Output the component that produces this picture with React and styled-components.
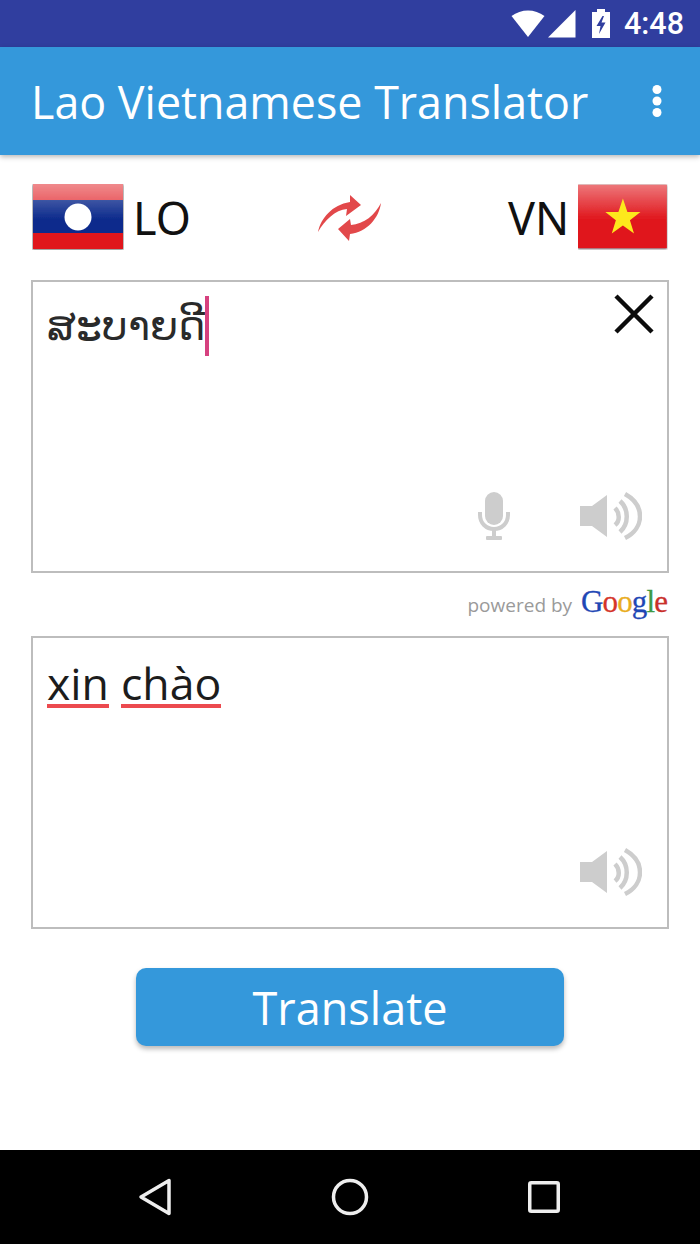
import React from 'react';
import styled, { createGlobalStyle } from 'styled-components';

const GlobalStyle = createGlobalStyle`
  html, body {
    margin: 0;
    padding: 0;
    background: #fff;
  }
  * {
    box-sizing: border-box;
  }
`;

const Page = styled.div`
  display: flex;
  flex-direction: column;
  width: 700px;
  height: 1244px;
  overflow: hidden;
  font-family: "Open Sans", "Noto Sans", sans-serif;
`;

const StatusBar = styled.div`
  display: flex;
  align-items: center;
  justify-content: flex-end;
  height: 47px;
  padding: 0 16px 0 0;
  background: #303e9f;
  color: #fff;
`;

const Clock = styled.span`
  margin-left: 13px;
  font-family: Roboto, sans-serif;
  font-size: 30.5px;
  font-weight: 500;
`;

const AppBar = styled.header`
  position: relative;
  z-index: 1;
  display: flex;
  align-items: center;
  justify-content: space-between;
  height: 108px;
  padding: 0 36px 0 31px;
  background: #3498db;
  box-shadow: 0 2px 5px rgba(0, 0, 0, 0.28);
`;

const Title = styled.h1`
  margin: 0;
  font-size: 44.8px;
  font-weight: 400;
  color: #fff;
`;

const Content = styled.main`
  flex: 1;
  display: flex;
  flex-direction: column;
  padding: 29px 31px 0;
  background: #fff;
`;

const LangRow = styled.div`
  display: flex;
  align-items: center;
  justify-content: space-between;
  height: 66px;
  padding: 0 1px;
  margin-bottom: 30px;
`;

const Lang = styled.div`
  display: flex;
  align-items: center;
  gap: 9px;
  width: 160px;
  justify-content: ${props => (props.$end ? 'flex-end' : 'flex-start')};
  font-family: "Noto Sans", sans-serif;
  font-size: 45px;
  color: #111;
`;

const TextBox = styled.div`
  position: relative;
  height: ${props => props.$height}px;
  padding: 15px 14px;
  border: 2px solid #bdbdbd;
`;

const LaoText = styled.div`
  display: flex;
  align-items: center;
  height: 62px;
  margin-top: -2px;
  font-family: "DejaVu Sans", sans-serif;
  font-size: 41px;
  font-weight: 300;
  color: #2a2a2a;
`;

const Cursor = styled.span`
  display: inline-block;
  width: 4px;
  height: 60px;
  background: #d6417f;
`;

const ResultText = styled.div`
  display: flex;
  gap: 12px;
  font-family: "Open Sans", sans-serif;
  font-size: 44.6px;
  line-height: 60px;
  color: #1c1c1c;
`;

const Misspelled = styled.span`
  height: 55px;
  border-bottom: 4px solid #ec4a4f;
`;

const CloseButton = styled.div`
  position: absolute;
  top: 10px;
  right: 11px;
  width: 44px;
  height: 44px;
`;

const BoxActions = styled.div`
  position: absolute;
  right: 25px;
  bottom: 31px;
  display: flex;
  align-items: flex-end;
  gap: 70px;
`;

const PoweredRow = styled.div`
  display: flex;
  align-items: center;
  justify-content: flex-end;
  gap: 9px;
  height: 63px;
  padding-right: 2px;
  color: #9a9a9a;
  font-family: "Open Sans", sans-serif;
  font-size: 19px;
`;

const GoogleWord = styled.span`
  font-family: "Liberation Serif", serif;
  font-size: 31px;
  letter-spacing: -0.9px;
  margin-top: -5px;
  -webkit-text-stroke: 0.3px currentColor;
`;

const Letter = styled.span`
  color: ${props => props.$color};
`;

const TranslateButton = styled.button`
  align-self: center;
  width: 428px;
  height: 78px;
  margin-top: 39px;
  border: none;
  border-radius: 10px;
  background: #3498db;
  color: #fff;
  font-family: "Open Sans", sans-serif;
  font-size: 45px;
  box-shadow: 0 3px 5px rgba(0, 0, 0, 0.28);
`;

const NavBar = styled.nav`
  display: flex;
  align-items: center;
  justify-content: space-between;
  height: 94px;
  padding: 0 140px 0 138px;
  background: #000;
`;

const WifiIcon = () => (
  <svg width="34" height="28" viewBox="0 0 34 28">
    <path d="M0.5 6 C10 -1.5 24 -1.5 33.5 6 L17 27 Z" fill="#fff" />
  </svg>
);

const SignalIcon = () => (
  <svg width="28" height="28" viewBox="0 0 28 28" style={{ marginLeft: 3 }}>
    <path d="M0 27.5 L27.5 0 V27.5 Z" fill="#fff" />
  </svg>
);

const BatteryIcon = () => (
  <svg width="20" height="30" viewBox="0 0 20 30" style={{ marginLeft: 15 }}>
    <path d="M6 0 H14 V3 H19 V29 H1 V3 H6 Z" fill="#fff" />
    <path d="M11.5 7 L5.5 17 H9.5 L8 25 L14.5 13.5 H10.5 L13 7 Z" fill="#303e9f" />
  </svg>
);

const MoreIcon = () => (
  <svg width="14" height="34" viewBox="0 0 14 34">
    <circle cx="7" cy="5.5" r="4.5" fill="#fff" />
    <circle cx="7" cy="17" r="4.5" fill="#fff" />
    <circle cx="7" cy="28.5" r="4.5" fill="#fff" />
  </svg>
);

const LaosFlag = () => (
  <svg width="92" height="66" viewBox="0 0 92 66">
    <defs>
      <linearGradient id="laoGloss" x1="0" y1="0" x2="0" y2="1">
        <stop offset="0" stopColor="#fff" stopOpacity="0.5" />
        <stop offset="0.24" stopColor="#fff" stopOpacity="0.35" />
        <stop offset="0.25" stopColor="#fff" stopOpacity="0.2" />
        <stop offset="0.55" stopColor="#fff" stopOpacity="0" />
      </linearGradient>
      <filter id="laoSoft" x="-10%" y="-10%" width="120%" height="120%">
        <feGaussianBlur stdDeviation="0.6" />
      </filter>
      <filter id="laoBlur" x="-10%" y="-10%" width="120%" height="120%">
        <feGaussianBlur stdDeviation="1" />
      </filter>
    </defs>
    <rect x="0.5" y="0.5" width="91" height="65.5" fill="#777" filter="url(#laoBlur)" />
    <g filter="url(#laoSoft)">
      <rect x="1" y="0" width="90" height="16" fill="#e0141a" />
      <rect x="1" y="16" width="90" height="33" fill="#0c2a8c" />
      <rect x="1" y="49" width="90" height="16" fill="#e0141a" />
      <circle cx="46" cy="33" r="13.5" fill="#fff" />
      <rect x="1" y="0" width="90" height="65" fill="url(#laoGloss)" />
    </g>
  </svg>
);

const VietnamFlag = () => (
  <svg width="92" height="66" viewBox="0 0 92 66">
    <defs>
      <linearGradient id="vnGloss" x1="0" y1="0" x2="0" y2="1">
        <stop offset="0" stopColor="#fff" stopOpacity="0.42" />
        <stop offset="0.5" stopColor="#fff" stopOpacity="0.04" />
        <stop offset="0.6" stopColor="#fff" stopOpacity="0" />
      </linearGradient>
      <filter id="vnSoft" x="-10%" y="-10%" width="120%" height="120%">
        <feGaussianBlur stdDeviation="0.6" />
      </filter>
      <filter id="vnBlur" x="-10%" y="-10%" width="120%" height="120%">
        <feGaussianBlur stdDeviation="1" />
      </filter>
    </defs>
    <rect x="0" y="0.5" width="91" height="65.5" fill="#777" filter="url(#vnBlur)" />
    <g filter="url(#vnSoft)">
      <rect x="0" y="0" width="91" height="65" fill="#e0141a" />
      <rect x="0" y="0" width="91" height="65" fill="url(#vnGloss)" />
      <path d="M46 14 L50.6 28 H64 L53.2 36.4 L57.4 50 L46 41.6 L34.6 50 L38.8 36.4 L28 28 H41.4 Z" fill="#fde81f" />
    </g>
  </svg>
);

const SwapIcon = () => (
  <svg width="66" height="50" viewBox="0 0 66 50">
    <path d="M1 40 C4 26 15 13 33 10 L33 3 L44 13 L29 24 L30 17 C18 18 8 28 1 40 Z" fill="#e2484a" />
    <path d="M64 11 C62 26 50 40 33 42 L32 49 L21 37 L33 27 L34 33 C47 32 58 23 64 11 Z" fill="#e2484a" />
  </svg>
);

const CloseIcon = () => (
  <svg width="44" height="44" viewBox="0 0 44 44">
    <path d="M4 4 L40 40 M40 4 L4 40" stroke="#0c0c0c" strokeWidth="4.5" fill="none" />
  </svg>
);

const MicIcon = () => (
  <svg width="32" height="48" viewBox="0 0 32 48">
    <rect x="7" y="0" width="18" height="33" rx="9" fill="#cdcdcd" />
    <path d="M2 20 V23 C2 31 8 37 16 37 C24 37 30 31 30 23 V20" stroke="#cdcdcd" strokeWidth="4" fill="none" />
    <path d="M16 37 V46" stroke="#cdcdcd" strokeWidth="4" />
    <rect x="8" y="44" width="16" height="4" rx="1" fill="#cdcdcd" />
  </svg>
);

const SpeakerIcon = () => (
  <svg width="62" height="48" viewBox="0 0 62 48">
    <path d="M0 14 H12 L27 3 V45 L12 34 H0 Z" fill="#cdcdcd" />
    <path d="M35 16 C40 21 40 29 35 33" stroke="#cdcdcd" strokeWidth="4.5" fill="none" />
    <path d="M40 9 C49 17 49 32 40 40" stroke="#cdcdcd" strokeWidth="4.5" fill="none" />
    <path d="M45 2 C65 13 65 36 45 46" stroke="#cdcdcd" strokeWidth="4.5" fill="none" />
  </svg>
);

const BackIcon = () => (
  <svg width="34" height="38" viewBox="0 0 34 38">
    <path d="M31 2.5 V35.5 L3 19 Z" stroke="#eee" strokeWidth="3.5" strokeLinejoin="round" fill="none" />
  </svg>
);

const HomeIcon = () => (
  <svg width="38" height="38" viewBox="0 0 38 38">
    <circle cx="19" cy="19" r="16.5" stroke="#eee" strokeWidth="3.5" fill="none" />
  </svg>
);

const RecentIcon = () => (
  <svg width="32" height="32" viewBox="0 0 32 32">
    <rect x="1.75" y="1.75" width="28.5" height="28.5" rx="1.5" stroke="#eee" strokeWidth="3.5" fill="none" />
  </svg>
);

const googleLetters = [
  ['G', '#1f47b5'],
  ['o', '#d5352b'],
  ['o', '#e9ad1f'],
  ['g', '#1f47b5'],
  ['l', '#3f9b45'],
  ['e', '#c9302b'],
];

export default function App() {
  return (
    <Page>
      <GlobalStyle />
      <StatusBar>
        <WifiIcon />
        <SignalIcon />
        <BatteryIcon />
        <Clock>4:48</Clock>
      </StatusBar>

      <AppBar>
        <Title>Lao Vietnamese Translator</Title>
        <MoreIcon />
      </AppBar>

      <Content>
        <LangRow>
          <Lang>
            <LaosFlag />
            LO
          </Lang>
          <SwapIcon />
          <Lang $end>
            VN
            <VietnamFlag />
          </Lang>
        </LangRow>

        <TextBox $height={293}>
          <LaoText>
            ສະບາຍດີ
            <Cursor />
          </LaoText>
          <CloseButton>
            <CloseIcon />
          </CloseButton>
          <BoxActions>
            <MicIcon />
            <SpeakerIcon />
          </BoxActions>
        </TextBox>

        <PoweredRow>
          powered by
          <GoogleWord>
            {googleLetters.map(([letter, color], i) => (
              <Letter key={i} $color={color}>{letter}</Letter>
            ))}
          </GoogleWord>
        </PoweredRow>

        <TextBox $height={293}>
          <ResultText>
            <Misspelled>xin</Misspelled>
            <Misspelled>chào</Misspelled>
          </ResultText>
          <BoxActions>
            <SpeakerIcon />
          </BoxActions>
        </TextBox>

        <TranslateButton>Translate</TranslateButton>
      </Content>

      <NavBar>
        <BackIcon />
        <HomeIcon />
        <RecentIcon />
      </NavBar>
    </Page>
  );
}
